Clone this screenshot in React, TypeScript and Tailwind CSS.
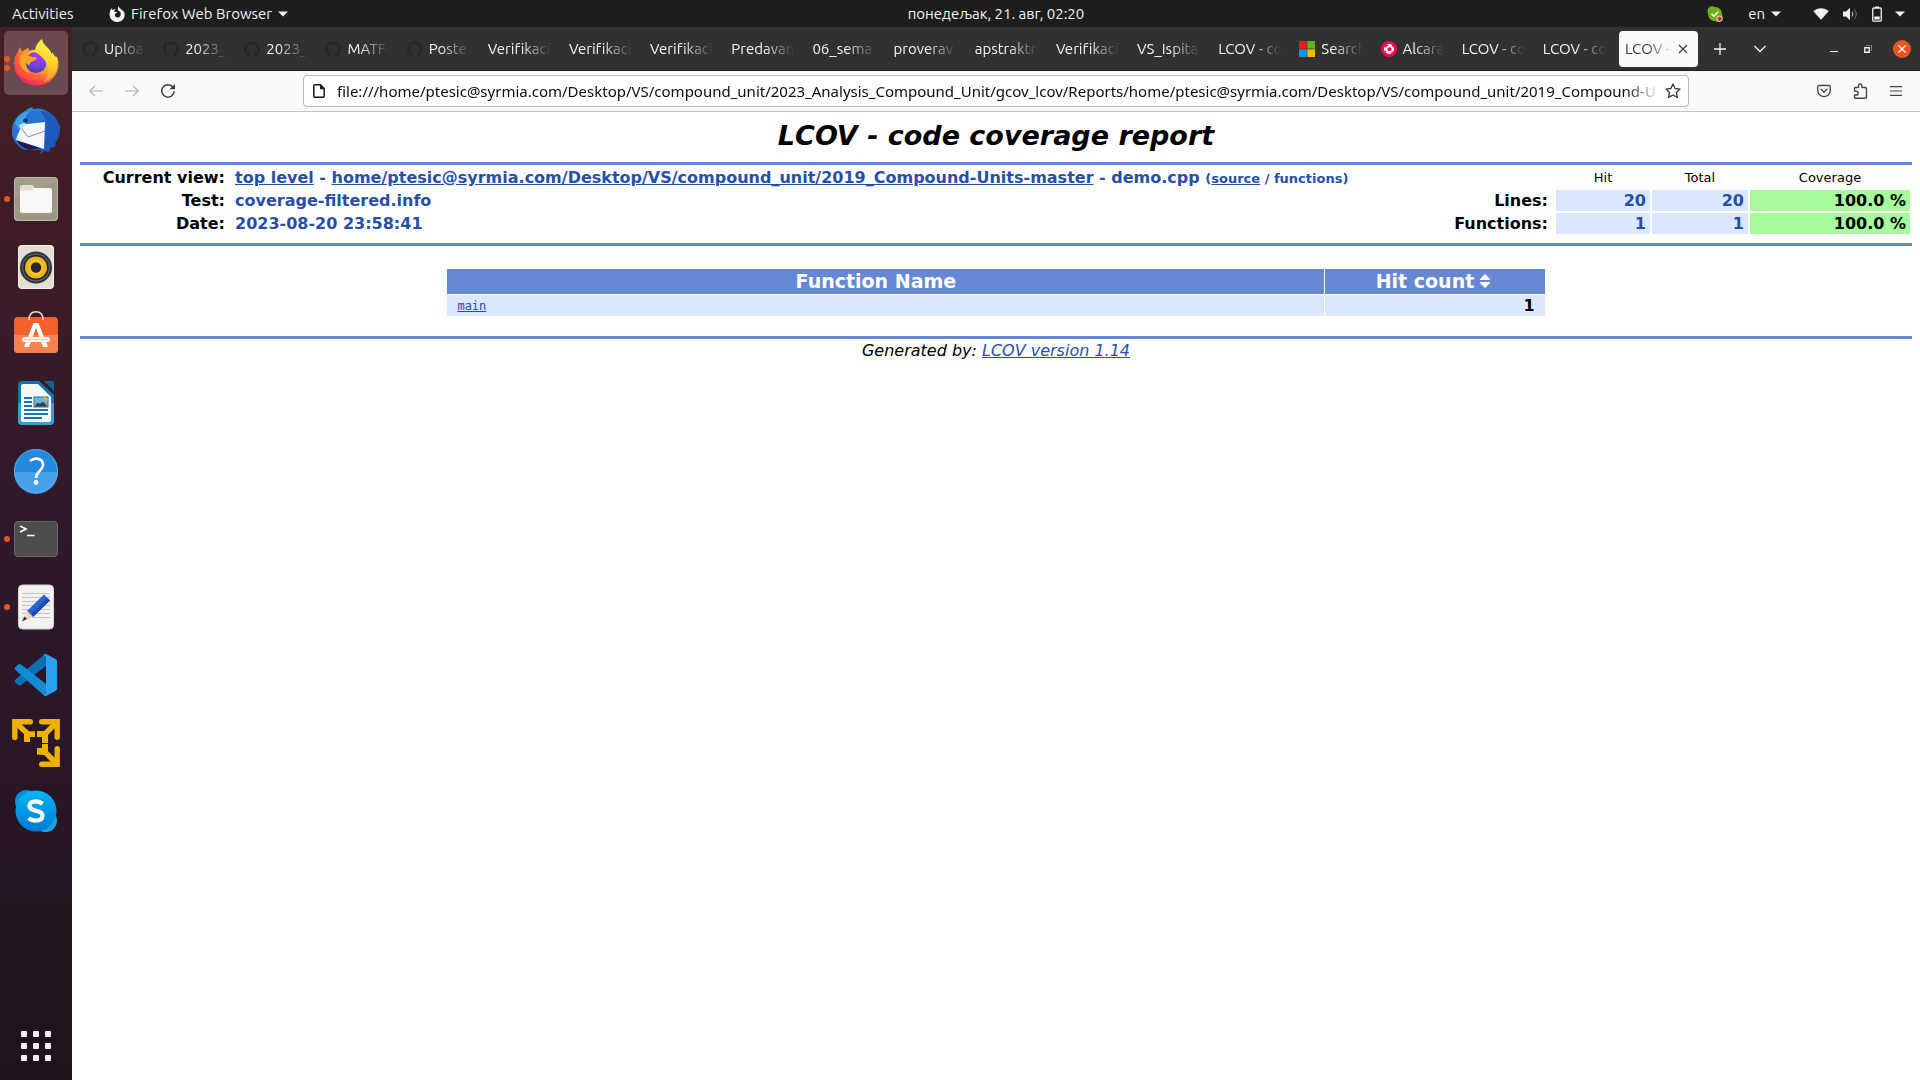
import type { ReactNode } from "react";

/* ---------- dock icons ---------- */

function FirefoxIcon() {
  return (
    <svg viewBox="0 0 48 48" className="size-12">
      <defs>
        <radialGradient id="ffBody" cx="0.78" cy="0.12" r="1.05">
          <stop offset="0" stopColor="#fff36b" />
          <stop offset="0.25" stopColor="#ffd83a" />
          <stop offset="0.5" stopColor="#ff9a2a" />
          <stop offset="0.75" stopColor="#ff4a45" />
          <stop offset="1" stopColor="#e8137c" />
        </radialGradient>
        <radialGradient id="ffOrb" cx="0.6" cy="0.2" r="0.85">
          <stop offset="0" stopColor="#a63df5" />
          <stop offset="0.55" stopColor="#7542e0" />
          <stop offset="1" stopColor="#4a3aa8" />
        </radialGradient>
        <linearGradient id="ffTail" x1="0.6" y1="0" x2="0.4" y2="1">
          <stop offset="0" stopColor="#fff44f" />
          <stop offset="0.5" stopColor="#ffd42c" />
          <stop offset="1" stopColor="#ff8a2b" />
        </linearGradient>
      </defs>
      <path d="M8 8c.5 2 1.500 3.500 2.500 4.500C12 11 14.500 9.500 17 9l-.5 3c5-2 12-1.500 16 2l12.500 4c2 5 2 11-.5 16C41 42 33.500 46.500 24.500 46.500 12 46.500 2 37 2 24.500c0-4 1-7.500 3-10.500l.5 2C5.500 13 6.500 10 8 8z" fill="url(#ffBody)" />
      <circle cx="24" cy="23.500" r="10.500" fill="url(#ffOrb)" />
      <path d="M23 13c0-5 2.500-9.500 7-13 .5 4 3 6 6 9 2.500 2.500 3 4 3.500 6l1-1.500c3.500 5 5 10 4 16-1.500 7-7 12-13.500 14 5.500-5 6-14 3-20-2-4-6-7.500-11-10.500z" fill="url(#ffTail)" />
      <path d="M8 17c3-2 8-1.500 10.500.5 2 1 5 .5 6 1 .5 2-2 3-4.500 4-2 1-2.500 2-2.500 4-1.500-.5-3-2-3-3-1 4 1 8.500 5.500 10.500-7 0-12-5-12.500-11z" fill="#ffa423" />
      <path d="M4 16c0 8 3 14 9 18 6 4 14 4 20 0-4 6-12 9-19 6C7 37 2 30 2.500 22z" fill="#ff6a2c" opacity=".45" />
    </svg>
  );
}

function ThunderbirdIcon() {
  return (
    <svg viewBox="0 0 48 48" className="size-12">
      <defs>
        <linearGradient id="tbBlue" x1="0" y1="0" x2="1" y2="1">
          <stop offset="0" stopColor="#35a7ea" />
          <stop offset="0.45" stopColor="#1f6fd0" />
          <stop offset="1" stopColor="#1b3f98" />
        </linearGradient>
      </defs>
      <path d="M12 5c2-2.500 5-4 9-5l-1 2C33-1 45 8 48 20c.5 6-1 12-4 15l-1 5-4 1-2 4-4-1-5 3 1-4H12C4 39 0 31 0 24 0 16 5 8 12 5z" fill="url(#tbBlue)" />
      <path d="M4 33c4 6 8 8 13 10l12-2z" fill="#241a4d" />
      <path d="M7 18l26-3-1 27L4 33z" fill="#f7f8fa" />
      <path d="M7 18l9 12 17-6" fill="none" stroke="#8d929a" strokeWidth="1" />
      <path d="M0 24C0 15 6 7 14 4c8-2 18 2 21 10-5-1-10 0-13 2-3-3-8-2-10 1-2 4-4 5-5 8l-4 9C1 31 0 28 0 24z" fill="#2577d6" />
      <path d="M3 16C6 8 12 4 19 4c-5 3-6 7-5 11-3 0-5 3-7 8z" fill="#3aa3ea" />
      <path d="M34 14c4 8 3 19-2 29l4 1 2-5 4 1 1-6c4-6 6-15 1-22-4-6-10-8-16-8 3 3 5 6 6 11z" fill="#1c59bb" />
      <path d="M7 18c1 4 2 6 5 1l2-4z" fill="#b8e3fb" />
      <circle cx="13.500" cy="13.500" r="2.300" fill="#173467" />
    </svg>
  );
}

function FilesIcon() {
  return (
    <svg viewBox="0 0 48 48" className="size-12">
      <rect x="2" y="2" width="44" height="44" rx="4" fill="#a39d8a" />
      <path d="M2 24L46 6v36a4 4 0 0 1-4 4H6a4 4 0 0 1-4-4z" fill="#989280" opacity=".6" />
      <rect x="2.500" y="2.500" width="43" height="43" rx="4" fill="none" stroke="#bdb8a8" />
      <path d="M8 12a2 2 0 0 1 2-2h10l4 4h14v8H8z" fill="#e3dfd0" />
      <path d="M8 17c0-1 .5-1.500 1.500-1.500H19c2 0 2.500-2.500 4.500-2.500H38a2 2 0 0 1 2 2v21a2 2 0 0 1-2 2H10a2 2 0 0 1-2-2z" fill="#f8f8f6" />
    </svg>
  );
}

function RhythmboxIcon() {
  return (
    <svg viewBox="0 0 48 48" className="size-12">
      <rect x="6" y="2" width="36" height="44" rx="4" fill="#e2ded3" />
      <rect x="6.500" y="2.500" width="35" height="43" rx="4" fill="none" stroke="#f1eee6" />
      <circle cx="24" cy="24.500" r="16" fill="#2e3440" />
      <circle cx="24" cy="24.500" r="14" fill="#5b6170" />
      <circle cx="24" cy="24.500" r="12.800" fill="#23272f" />
      <circle cx="24" cy="24.500" r="11" fill="#efb713" />
      <circle cx="24" cy="24.500" r="7.500" fill="#f8ca37" />
      <circle cx="24" cy="24.500" r="5.300" fill="#25272b" />
    </svg>
  );
}

function SoftwareIcon() {
  return (
    <svg viewBox="0 0 48 48" className="size-12">
      <rect x="2" y="6" width="44" height="36" rx="4" fill="#f0622a" />
      <path d="M2 24h44v14a4 4 0 0 1-4 4H6a4 4 0 0 1-4-4z" fill="#f58250" />
      <path d="M17 9C17 3 20 .8 24 .8S31 3 31 9" fill="none" stroke="#f3dcae" strokeWidth="1.600" />
      <path d="M12 36L21.500 12h5L36 36h-5L24 17l-7 19z" fill="#fff" />
      <rect x="10" y="26" width="28" height="5" rx="2.500" fill="#fff" />
      <path d="M12 28.500h24" stroke="#f9b294" strokeWidth=".8" />
    </svg>
  );
}

function WriterIcon() {
  return (
    <svg viewBox="0 0 48 48" className="size-12">
      <path d="M10 2h17l15 14v26a4 4 0 0 1-4 4H10a4 4 0 0 1-4-4V6a4 4 0 0 1 4-4z" fill="#1276ac" />
      <path d="M6 24h36v18a4 4 0 0 1-4 4H10a4 4 0 0 1-4-4z" fill="#3a9fd0" />
      <path d="M32 2h8a2 2 0 0 1 2 2v8z" fill="#136390" />
      <path d="M11 5h15l13 13v23a2 2 0 0 1-2 2H11a2 2 0 0 1-2-2V7a2 2 0 0 1 2-2z" fill="#f8f8f8" />
      <path d="M12 19h8M12 23h8M12 27h8M12 31h24M12 35h24M12 39h18" stroke="#1276ac" strokeWidth="2" />
      <rect x="22" y="18" width="14" height="10" fill="#70b6dc" stroke="#1276ac" />
      <path d="M23 27.500c1-4 4-5 5-2 1-3 4-4 7 2z" fill="#394349" />
      <path d="M31 18.500h4.500V22c-2 0-4-1-4.500-3.500z" fill="#f3b518" />
    </svg>
  );
}

function HelpIcon() {
  return (
    <svg viewBox="0 0 48 48" className="size-12">
      <circle cx="24" cy="24" r="22" fill="#2488dd" />
      <path d="M2 25h44a22 22 0 0 1-44 0z" fill="#44a1e8" />
      <circle cx="24" cy="24" r="21.500" fill="none" stroke="#55aaf0" />
      <path d="M18 14c5-4 13-3 13 4 0 6-7 6-7 13" fill="none" stroke="#fff" strokeWidth="2.600" />
      <circle cx="24" cy="35.500" r="2.400" fill="#fff" />
    </svg>
  );
}

function TerminalIcon() {
  return (
    <svg viewBox="0 0 48 48" className="size-12">
      <rect x="2.500" y="6.500" width="43" height="35" rx="3.500" fill="#4d4d4d" stroke="#686868" />
      <path d="M8 11l6 3-6 3" fill="none" stroke="#fff" strokeWidth="1.700" />
      <path d="M15 20.500h7.500" stroke="#fff" strokeWidth="1.500" />
    </svg>
  );
}

function EditorIcon() {
  return (
    <svg viewBox="0 0 48 48" className="size-12">
      <rect x="6.500" y="2" width="35" height="44" rx="4" fill="#f2f2f1" stroke="#d3d3d1" />
      <path d="M10 10.500h28M10 14.500h28M10 18.500h28M10 22.500h28M10 26.500h28M10 30.500h28M10 34.500h28" stroke="#c4c4c4" />
      <path d="M32 11.500l6 6-17 16.500-6-6z" fill="#2c61d5" />
      <path d="M35.500 15l2.500 2.500-17 16.500-2.500-2.500z" fill="#1d4cb2" />
      <path d="M15 28l6 6-6.500 3-2-2z" fill="#f2d7bb" />
      <path d="M12.500 33.500l2.500 2.500-5 2.500z" fill="#303030" />
    </svg>
  );
}

function CodeIcon() {
  return (
    <svg viewBox="0 0 48 48" className="size-12">
      <path d="M34 3v12L9 34c-1 1-2 1-3 0l-2.500-2.500c-1-1-1-2 0-3L32 3.500z" fill="#0a70b5" />
      <path d="M34 45V33L9 13.500c-1-.8-2-.8-3 0L3.500 16c-1 1-1 2 0 3L32 44.500z" fill="#118bd3" />
      <path d="M31 44c1.500 1 2 1.200 3.500.8L43.500 40c1-.5 1.500-1.300 1.500-2.500v-27c0-1.200-.5-2-1.500-2.500L34.500 3.200C33 2.600 32.300 3 31 4c1.500-.8 3 0 3 2v36c0 2-1.500 3-3 2z" fill="#2ba0ef" />
    </svg>
  );
}

function VmwareIcon() {
  return (
    <svg viewBox="0 0 48 48" className="size-12">
      <g fill="none" stroke="#edb200" strokeWidth="5.400" strokeLinecap="round" strokeLinejoin="miter">
        <path d="M2.800 18.500V2.800h15.500" />
        <path d="M29.700 2.800h15.500v15.500" />
        <path d="M29.700 45.200h15.500V29.700" />
      </g>
      <path d="M4 4L16 15h7M44 4L33 15h-5M44 44L33 33h-8" fill="none" stroke="#edb200" strokeWidth="5.500" />
      <path d="M12 13h11v5h-5v5h-6zM25 12h11v12h-6v-6h-5zM36 25v11h-6v-1h-5v-6h5v-4z" fill="#edb200" />
    </svg>
  );
}

function SkypeIcon() {
  return (
    <svg viewBox="0 0 48 48" className="size-12">
      <defs>
        <linearGradient id="skype" x1="0" y1="0" x2="0" y2="1">
          <stop offset="0" stopColor="#00b7f0" />
          <stop offset="1" stopColor="#0078d4" />
        </linearGradient>
      </defs>
      <circle cx="14.500" cy="14.500" r="11.500" fill="#0b8fd8" />
      <circle cx="33.500" cy="33.500" r="11.500" fill="#18a2e6" />
      <circle cx="24" cy="24" r="20.500" fill="url(#skype)" />
      <path d="M30.500 17c-2-2-4-2.700-7-2.700-3.500 0-6 1.700-6 4.500 0 6.500 13 3.500 13 9.700 0 3.500-3 5-6.800 5-3 0-5.200-.8-7-2.600" fill="none" stroke="#fff" strokeWidth="4.200" />
    </svg>
  );
}

const dock: { name: string; icon: ReactNode; dots: number }[] = [
  { name: "Firefox Web Browser", icon: <FirefoxIcon />, dots: 2 },
  { name: "Thunderbird Mail", icon: <ThunderbirdIcon />, dots: 0 },
  { name: "Files", icon: <FilesIcon />, dots: 1 },
  { name: "Rhythmbox", icon: <RhythmboxIcon />, dots: 0 },
  { name: "Ubuntu Software", icon: <SoftwareIcon />, dots: 0 },
  { name: "LibreOffice Writer", icon: <WriterIcon />, dots: 0 },
  { name: "Help", icon: <HelpIcon />, dots: 0 },
  { name: "Terminal", icon: <TerminalIcon />, dots: 1 },
  { name: "Text Editor", icon: <EditorIcon />, dots: 1 },
  { name: "Visual Studio Code", icon: <CodeIcon />, dots: 0 },
  { name: "VMware", icon: <VmwareIcon />, dots: 0 },
  { name: "Skype", icon: <SkypeIcon />, dots: 0 },
];

function Dock() {
  return (
    <nav aria-label="Dock" className="flex w-[72px] shrink-0 flex-col items-center gap-1 bg-linear-to-b from-[#471f23] via-[#2f182d] to-[#21141c] pt-1 pb-0.5">
      {dock.map((app, i) => (
        <button
          key={app.name}
          aria-label={app.name}
          className={`relative flex size-16 shrink-0 items-center justify-center rounded-[5px] ${i === 0 ? "bg-white/20" : ""}`}
        >
          {app.icon}
          <span className="absolute inset-y-0 left-0 flex flex-col justify-center gap-[3px]">
            {Array.from({ length: app.dots }, (_, d) => (
              <span key={d} className="size-[6px] rounded-full bg-[#e95420]" />
            ))}
          </span>
        </button>
      ))}
      <button aria-label="Show Applications" className="mt-auto grid size-16 shrink-0 grid-cols-3 place-content-center justify-items-center gap-[6px] px-[17px]">
        {Array.from({ length: 9 }, (_, d) => (
          <span key={d} className="size-[6px] rounded-[1px] bg-[#f2f1f0]" />
        ))}
      </button>
    </nav>
  );
}

/* ---------- system bar ---------- */

function Caret() {
  return (
    <svg viewBox="0 0 10 6" className="h-[6px] w-[10px]">
      <path d="M0 .5h10L5 5.500z" fill="#f2f2f2" />
    </svg>
  );
}

function TopBar() {
  return (
    <header className="grid h-[27px] shrink-0 grid-cols-[72px_1fr_auto_1fr] items-center bg-[#1d1d1d] text-[15px] leading-5 text-[#f2f2f2]">
      <div className="col-span-2 flex items-center pl-3">
        <button className="w-[97px] text-left">Activities</button>
        <button className="flex items-center gap-[6px]">
          <svg viewBox="0 0 16 16" className="size-4">
            <path fillRule="evenodd" fill="#f2f2f2" d="M9.500 0c.3 1.400 1.300 2 2.700 3.200C14.600 4.600 15.700 6.500 15.700 9A7.200 7.200 0 0 1 8.300 16 7.600 7.600 0 0 1 .5 8.700C.5 6 1.300 4 2.800 2.300c.1.800.3 1.200.8 1.600 1-.7 2-.9 3.200-.9C6 3.800 5.300 4.600 5.300 5.400c.9.700 1.900.5 2.900.7-.2 1.100-1.800 1-2.400 2.400.1 2 1.300 2.900 2.800 2.900 1.900 0 3.200-1.400 3.200-3.200 0-1.500-.9-2.800-2.400-3.400C8.700 3.400 8.600 1.500 9.500 0z" />
          </svg>
          Firefox Web Browser
          <Caret />
        </button>
      </div>
      <button className="text-center">понедељак, 21. авг, 02:20</button>
      <div className="flex items-center justify-end pr-[15px]">
        <svg viewBox="0 0 16 16" className="mr-[25px] size-4" aria-label="Skype status">
          <path d="M5 .3c1.200 0 2 .2 2.700.6C12 .8 15.200 4 15 8.300c1.600 3.500-.4 7.400-4.200 7.400-1 0-1.800-.2-2.600-.6C4 15.200 1 12 1 7.800-.6 4 1.300.3 5 .3z" fill="#6fae1a" />
          <path d="M4.500 7.800l2.300 2.300 4.400-4.400" fill="none" stroke="#fff" strokeWidth="1.500" />
          <circle cx="12.600" cy="12.800" r="2.700" fill="#e02020" stroke="#fff" strokeWidth=".9" />
        </svg>
        <button className="mr-8 flex items-center gap-[6px]">
          en
          <Caret />
        </button>
        <button aria-label="System menu" className="flex items-center">
          <svg viewBox="0 0 16 12" className="mr-[14px] h-3 w-4">
            <path d="M.3 3.200C4.500-.7 11.500-.7 15.700 3.200L8 11.800z" fill="#f2f2f2" />
          </svg>
          <svg viewBox="0 0 15 14" className="mr-[14px] h-[14px] w-[15px]">
            <path d="M0 4.500h3L7 .8v12.400L3 9.500H0z" fill="#f2f2f2" />
            <path d="M9 4.500q1.800 2.500 0 5" fill="none" stroke="#d0d0d0" />
            <path d="M11.500 2.500q3.500 4.500 0 9" fill="none" stroke="#777" />
          </svg>
          <svg viewBox="0 0 10 16" className="mr-[13px] h-4 w-[10px]">
            <rect x=".75" y="2" width="8.500" height="13.200" rx="1" fill="none" stroke="#f2f2f2" strokeWidth="1.300" />
            <path d="M3 .5h4V2H3zM2.300 10.500h5.400v3H2.300z" fill="#f2f2f2" />
          </svg>
          <Caret />
        </button>
      </div>
    </header>
  );
}

/* ---------- browser chrome ---------- */

function GithubMark() {
  return (
    <svg viewBox="0 0 16 16" className="size-4 shrink-0">
      <path
        fill="#24292e"
        d="M8 0C3.580 0 0 3.580 0 8c0 3.540 2.290 6.530 5.470 7.590.4.070.55-.17.55-.38 0-.19-.01-.82-.01-1.490-2.010.37-2.530-.49-2.690-.94-.09-.23-.48-.94-.82-1.130-.28-.15-.68-.52-.01-.53.63-.01 1.080.58 1.230.82.72 1.210 1.870.87 2.330.66.07-.52.28-.87.51-1.070-1.780-.2-3.640-.89-3.640-3.950 0-.87.31-1.590.82-2.150-.08-.2-.36-1.020.08-2.120 0 0 .67-.21 2.200.82.64-.18 1.320-.27 2-.27s1.360.09 2 .27c1.530-1.040 2.200-.82 2.200-.82.44 1.100.16 1.920.08 2.120.51.56.82 1.270.82 2.150 0 3.070-1.870 3.750-3.650 3.950.29.25.54.73.54 1.480 0 1.070-.01 1.930-.01 2.200 0 .21.15.46.55.38A8.010 8.010 0 0 0 16 8c0-4.420-3.580-8-8-8z"
      />
    </svg>
  );
}

function MicrosoftMark() {
  return (
    <svg viewBox="0 0 16 16" className="size-4 shrink-0">
      <path d="M0 0h7.700v7.700H0z" fill="#f8151c" />
      <path d="M8.300 0H16v7.700H8.300z" fill="#58b818" />
      <path d="M0 8.300h7.700V16H0z" fill="#0a99ee" />
      <path d="M8.300 8.300H16V16H8.300z" fill="#fdb900" />
    </svg>
  );
}

function BallMark() {
  return (
    <svg viewBox="0 0 16 16" className="size-4 shrink-0">
      <circle cx="8" cy="8" r="8" fill="#f5054f" />
      <circle cx="8" cy="8" r="5" fill="#fff" />
      <path d="M8.500 6l2.200 1.400-.8 2.700-2.700.2-1-2.600zM3.500 5l3-2 .5 1.800-2.500 2zM11 3.500l2 3-1.800-.5zM3 9.500l2 .5.500 2.500zM10 12.500l.5-1.700 2-.8z" fill="#f5054f" />
    </svg>
  );
}

type Tab = { title: string; icon?: "github" | "microsoft" | "ball" };

const tabs: Tab[] = [
  { title: "Uploa", icon: "github" },
  { title: "2023_", icon: "github" },
  { title: "2023_", icon: "github" },
  { title: "MATF-", icon: "github" },
  { title: "Poste", icon: "github" },
  { title: "Verifikaci" },
  { title: "Verifikaci" },
  { title: "Verifikaci" },
  { title: "Predavan" },
  { title: "06_sema" },
  { title: "proverav" },
  { title: "apstraktn" },
  { title: "Verifikaci" },
  { title: "VS_Ispita" },
  { title: "LCOV - co" },
  { title: "Search", icon: "microsoft" },
  { title: "Alcara", icon: "ball" },
  { title: "LCOV - co" },
  { title: "LCOV - co" },
];

function TabStrip() {
  return (
    <div className="flex h-[44px] shrink-0 items-center border-b border-[#1f1d1e] bg-[#333031] pt-px pr-[9px] pl-[5px] text-[15px] leading-5 text-[#f5f5f5]">
      <div role="tablist" className="flex min-w-0 flex-1 gap-1 pr-0.5">
        {tabs.map((tab, i) => (
          <button key={i} role="tab" aria-selected="false" className="flex h-9 min-w-0 flex-1 basis-0 items-center gap-[6px] px-[5px]">
            {tab.icon === "github" && <GithubMark />}
            {tab.icon === "microsoft" && <MicrosoftMark />}
            {tab.icon === "ball" && <BallMark />}
            <span className="min-w-0 flex-1 overflow-hidden text-left whitespace-nowrap [font-variant-ligatures:none] [mask-image:linear-gradient(to_left,transparent_4px,black_34px)]">
              {tab.title}
            </span>
          </button>
        ))}
        <div role="tab" aria-selected="true" className="flex h-9 min-w-0 flex-1 basis-0 items-center rounded-[4px] bg-[#f9f9fa] px-[6px] text-[#38383d]">
          <span className="min-w-0 flex-1 overflow-hidden whitespace-nowrap [mask-image:linear-gradient(to_left,transparent,black_28px)]">LCOV -</span>
          <button aria-label="Close tab" className="flex w-[18px] justify-center">
            <svg viewBox="0 0 10 10" className="size-[10px]">
              <path d="M1 1l8 8M9 1L1 9" stroke="#38383d" strokeWidth="1.100" />
            </svg>
          </button>
        </div>
      </div>
      <button aria-label="New tab" className="flex w-10 justify-center">
        <svg viewBox="0 0 12 12" className="size-3">
          <path d="M6 0v12M0 6h12" stroke="#f5f5f5" strokeWidth="1.300" />
        </svg>
      </button>
      <button aria-label="List all tabs" className="flex w-10 justify-center">
        <svg viewBox="0 0 12 8" className="h-2 w-3">
          <path d="M.5 1L6 6.500 11.500 1" fill="none" stroke="#f5f5f5" strokeWidth="1.300" />
        </svg>
      </button>
      <button aria-label="Minimize" className="ml-[37px] flex w-[34px] justify-center">
        <svg viewBox="0 0 8 10" className="h-[10px] w-2">
          <path d="M0 7.500h8" stroke="#f5f5f5" />
        </svg>
      </button>
      <button aria-label="Restore" className="flex w-[34px] justify-center">
        <svg viewBox="0 0 8 8" className="size-2">
          <path d="M.75 2.750h4.500v4.500h-4.500z" fill="none" stroke="#f5f5f5" strokeWidth="1.300" />
          <path d="M2 .5h5.500V6" fill="none" stroke="#8b898a" strokeWidth=".9" />
        </svg>
      </button>
      <button aria-label="Close window" className="ml-2 flex size-[18px] items-center justify-center rounded-full bg-[#e95420]">
        <svg viewBox="0 0 8 8" className="size-2">
          <path d="M.5.5l7 7M7.500.5l-7 7" stroke="#fff" strokeWidth="1.200" />
        </svg>
      </button>
    </div>
  );
}

function Toolbar() {
  return (
    <div className="flex h-[41px] shrink-0 items-center border-b border-[#c3c3c6] bg-[#f9f9fa]">
      <button aria-label="Back" className="ml-[6px] flex w-9 justify-center">
        <svg viewBox="0 0 14 12" className="h-3 w-[14px]" fill="none" stroke="#aeaeb0" strokeWidth="1.200">
          <path d="M14 6H1M6 .8L.8 6 6 11.200" />
        </svg>
      </button>
      <button aria-label="Forward" className="flex w-9 justify-center">
        <svg viewBox="0 0 14 12" className="h-3 w-[14px]" fill="none" stroke="#aeaeb0" strokeWidth="1.200">
          <path d="M0 6h13M8 .8L13.200 6 8 11.200" />
        </svg>
      </button>
      <button aria-label="Reload" className="flex w-9 justify-center">
        <svg viewBox="0 0 14 14" className="size-[14px]">
          <path d="M11.800 3A6.200 6.200 0 1 0 13.200 7" fill="none" stroke="#38383d" strokeWidth="1.400" />
          <path d="M14 0v5.200H8.500z" fill="#38383d" />
        </svg>
      </button>
      <div className="ml-[117px] flex h-8 min-w-0 flex-1 items-center rounded-[4px] border border-[#b8b8bc] bg-white pr-[7px] pl-[9px]">
        <svg viewBox="0 0 12 14" className="h-[14px] w-3 shrink-0">
          <path d="M2 .8h5.500l3.700 3.700V12a1.200 1.200 0 0 1-1.200 1.200H2A1.200 1.200 0 0 1 .8 12V2A1.200 1.200 0 0 1 2 .8z" fill="none" stroke="#18181b" strokeWidth="1.500" />
          <path d="M7 .8v4.400h4.400z" fill="#18181b" />
        </svg>
        <input
          aria-label="Address"
          readOnly
          value="file:///home/ptesic@syrmia.com/Desktop/VS/compound_unit/2023_Analysis_Compound_Unit/gcov_lcov/Reports/home/ptesic@syrmia.com/Desktop/VS/compound_unit/2019_Compound-U"
          className="ml-3 h-6 min-w-0 flex-1 bg-transparent font-['Noto_Sans',sans-serif] text-[15px] text-[#0c0c0d] outline-none [mask-image:linear-gradient(to_left,transparent,black_36px)]"
        />
        <button aria-label="Bookmark this page" className="ml-1">
          <svg viewBox="0 0 16 16" className="size-4">
            <path d="M8 1l2.100 4.500 4.900.6-3.600 3.400 1 4.900L8 12l-4.400 2.400 1-4.900L1 6.100l4.900-.6z" fill="none" stroke="#38383d" strokeWidth="1.300" strokeLinejoin="round" />
          </svg>
        </button>
      </div>
      <div className="ml-[117px] flex pr-[6px]">
        <button aria-label="Save to Pocket" className="flex w-9 items-center justify-center">
          <svg viewBox="0 0 14 14" className="size-[14px]" fill="none" stroke="#45454a" strokeWidth="1.300">
            <path d="M1.900 1.500h10.200c.7 0 1.200.5 1.200 1.200v3.600a6.300 6.300 0 0 1-12.600 0V2.700c0-.7.5-1.200 1.200-1.200z" />
            <path d="M4 5.200l3 2.900 3-2.900" strokeLinecap="round" />
          </svg>
        </button>
        <button aria-label="Extensions" className="flex w-9 items-center justify-center">
          <svg viewBox="0 0 15 16" className="h-4 w-[15px]" fill="none" stroke="#45454a" strokeWidth="1.400" strokeLinejoin="round">
            <path d="M1.500 8V5.500a1 1 0 0 1 1-1h3V2.700a1.700 1.700 0 0 1 3.400 0v1.800H12a1.500 1.500 0 0 1 1.500 1.500v7.700a1.500 1.500 0 0 1-1.500 1.500H2.500a1 1 0 0 1-1-1V12h1.800a1.700 1.700 0 0 0 0-3.700z" />
          </svg>
        </button>
        <button aria-label="Open application menu" className="flex w-9 items-center justify-center">
          <svg viewBox="0 0 12 10" className="h-[10px] w-3">
            <path d="M0 .7h12M0 5h12M0 9.300h12" stroke="#45454a" strokeWidth="1.200" />
          </svg>
        </button>
      </div>
    </div>
  );
}

/* ---------- coverage report ---------- */

const metrics = [
  { label: "Lines:", hit: 20, total: 20, coverage: "100.0 %" },
  { label: "Functions:", hit: 1, total: 1, coverage: "100.0 %" },
];

function Report() {
  return (
    <main className="flex-1 bg-white px-2 font-['DejaVu_Sans','Verdana',sans-serif] text-[16px] leading-[21px] text-black">
      <h1 className="h-[50px] pt-2 text-center text-[27px] leading-8 font-bold italic">LCOV - code coverage report</h1>

      <section className="flex justify-between border-y-3 border-[#6688d4] pt-0.5 pb-[9px] font-bold">
        <dl className="grid auto-rows-[21px] grid-cols-[145px_auto] gap-x-[10px] gap-y-0.5 whitespace-nowrap">
          <dt className="text-right">Current view:</dt>
          <dd className="text-[#284fa8]">
            <a href="#top" className="underline">top level</a> -{" "}
            <a href="#directory" className="underline">home/ptesic@syrmia.com/Desktop/VS/compound_unit/2019_Compound-Units-master</a> - demo.cpp{" "}
            <span className="text-[13px]">(<a href="#source" className="underline">source</a> / functions)</span>
          </dd>
          <dt className="text-right">Test:</dt>
          <dd className="text-[#284fa8]">coverage-filtered.info</dd>
          <dt className="text-right">Date:</dt>
          <dd className="text-[#284fa8]">2023-08-20 23:58:41</dd>
        </dl>
        <table className="-my-0.5 border-separate border-spacing-0.5">
          <thead>
            <tr className="h-[21px] text-[13px]">
              <td />
              <th scope="col" className="w-[94px] p-0 font-normal">Hit</th>
              <th scope="col" className="w-24 p-0 font-normal">Total</th>
              <th scope="col" className="w-40 p-0 font-normal">Coverage</th>
            </tr>
          </thead>
          <tbody>
            {metrics.map((m) => (
              <tr key={m.label} className="h-[21px] text-right">
                <th scope="row" className="py-0 pr-[6px] text-right">{m.label}</th>
                <td className="bg-[#dae7fe] py-0 pr-1 text-[#284fa8]">{m.hit}</td>
                <td className="bg-[#dae7fe] py-0 pr-1 text-[#284fa8]">{m.total}</td>
                <td className="bg-[#a7fc9d] py-0 pr-1">{m.coverage}</td>
              </tr>
            ))}
          </tbody>
        </table>
      </section>

      <table className="mx-auto mt-[22px] mb-[19px] w-3/5 table-fixed border-separate border-spacing-px">
        <thead>
          <tr className="h-[25px] bg-[#6688d4] text-[19px] leading-6 text-white">
            <th scope="col" className="w-4/5 py-0 pr-5 pl-0 align-top font-bold">Function Name</th>
            <th scope="col" className="w-1/5 py-0 pr-1 pl-0 align-top font-bold">
              <button className="inline-flex items-center gap-[6px] align-top">
                Hit count
                <svg viewBox="0 0 10 14" className="h-[14px] w-[10px]">
                  <path d="M5 0l5 5v1H0V5zM0 8h10v1l-5 5-5-5z" fill="#fff" />
                </svg>
              </button>
            </th>
          </tr>
        </thead>
        <tbody>
          <tr className="h-[21px] bg-[#dae7fe]">
            <td className="px-[10px] py-0 align-middle font-['DejaVu_Sans_Mono',monospace] text-[12px] leading-5">
              <a href="#main" className="text-[#284fa8] underline">main</a>
            </td>
            <td className="px-[10px] py-0 text-right font-bold">1</td>
          </tr>
        </tbody>
      </table>

      <footer className="border-t-3 border-[#6688d4] pt-px text-center italic">
        Generated by: <a href="#lcov" className="text-[#284fa8] underline">LCOV version 1.14</a>
      </footer>
    </main>
  );
}

export default function App() {
  return (
    <div className="flex min-h-screen flex-col font-['Ubuntu','Noto_Sans',sans-serif]">
      <TopBar />
      <div className="flex flex-1">
        <Dock />
        <div className="flex min-w-0 flex-1 flex-col">
          <TabStrip />
          <Toolbar />
          <Report />
        </div>
      </div>
    </div>
  );
}
